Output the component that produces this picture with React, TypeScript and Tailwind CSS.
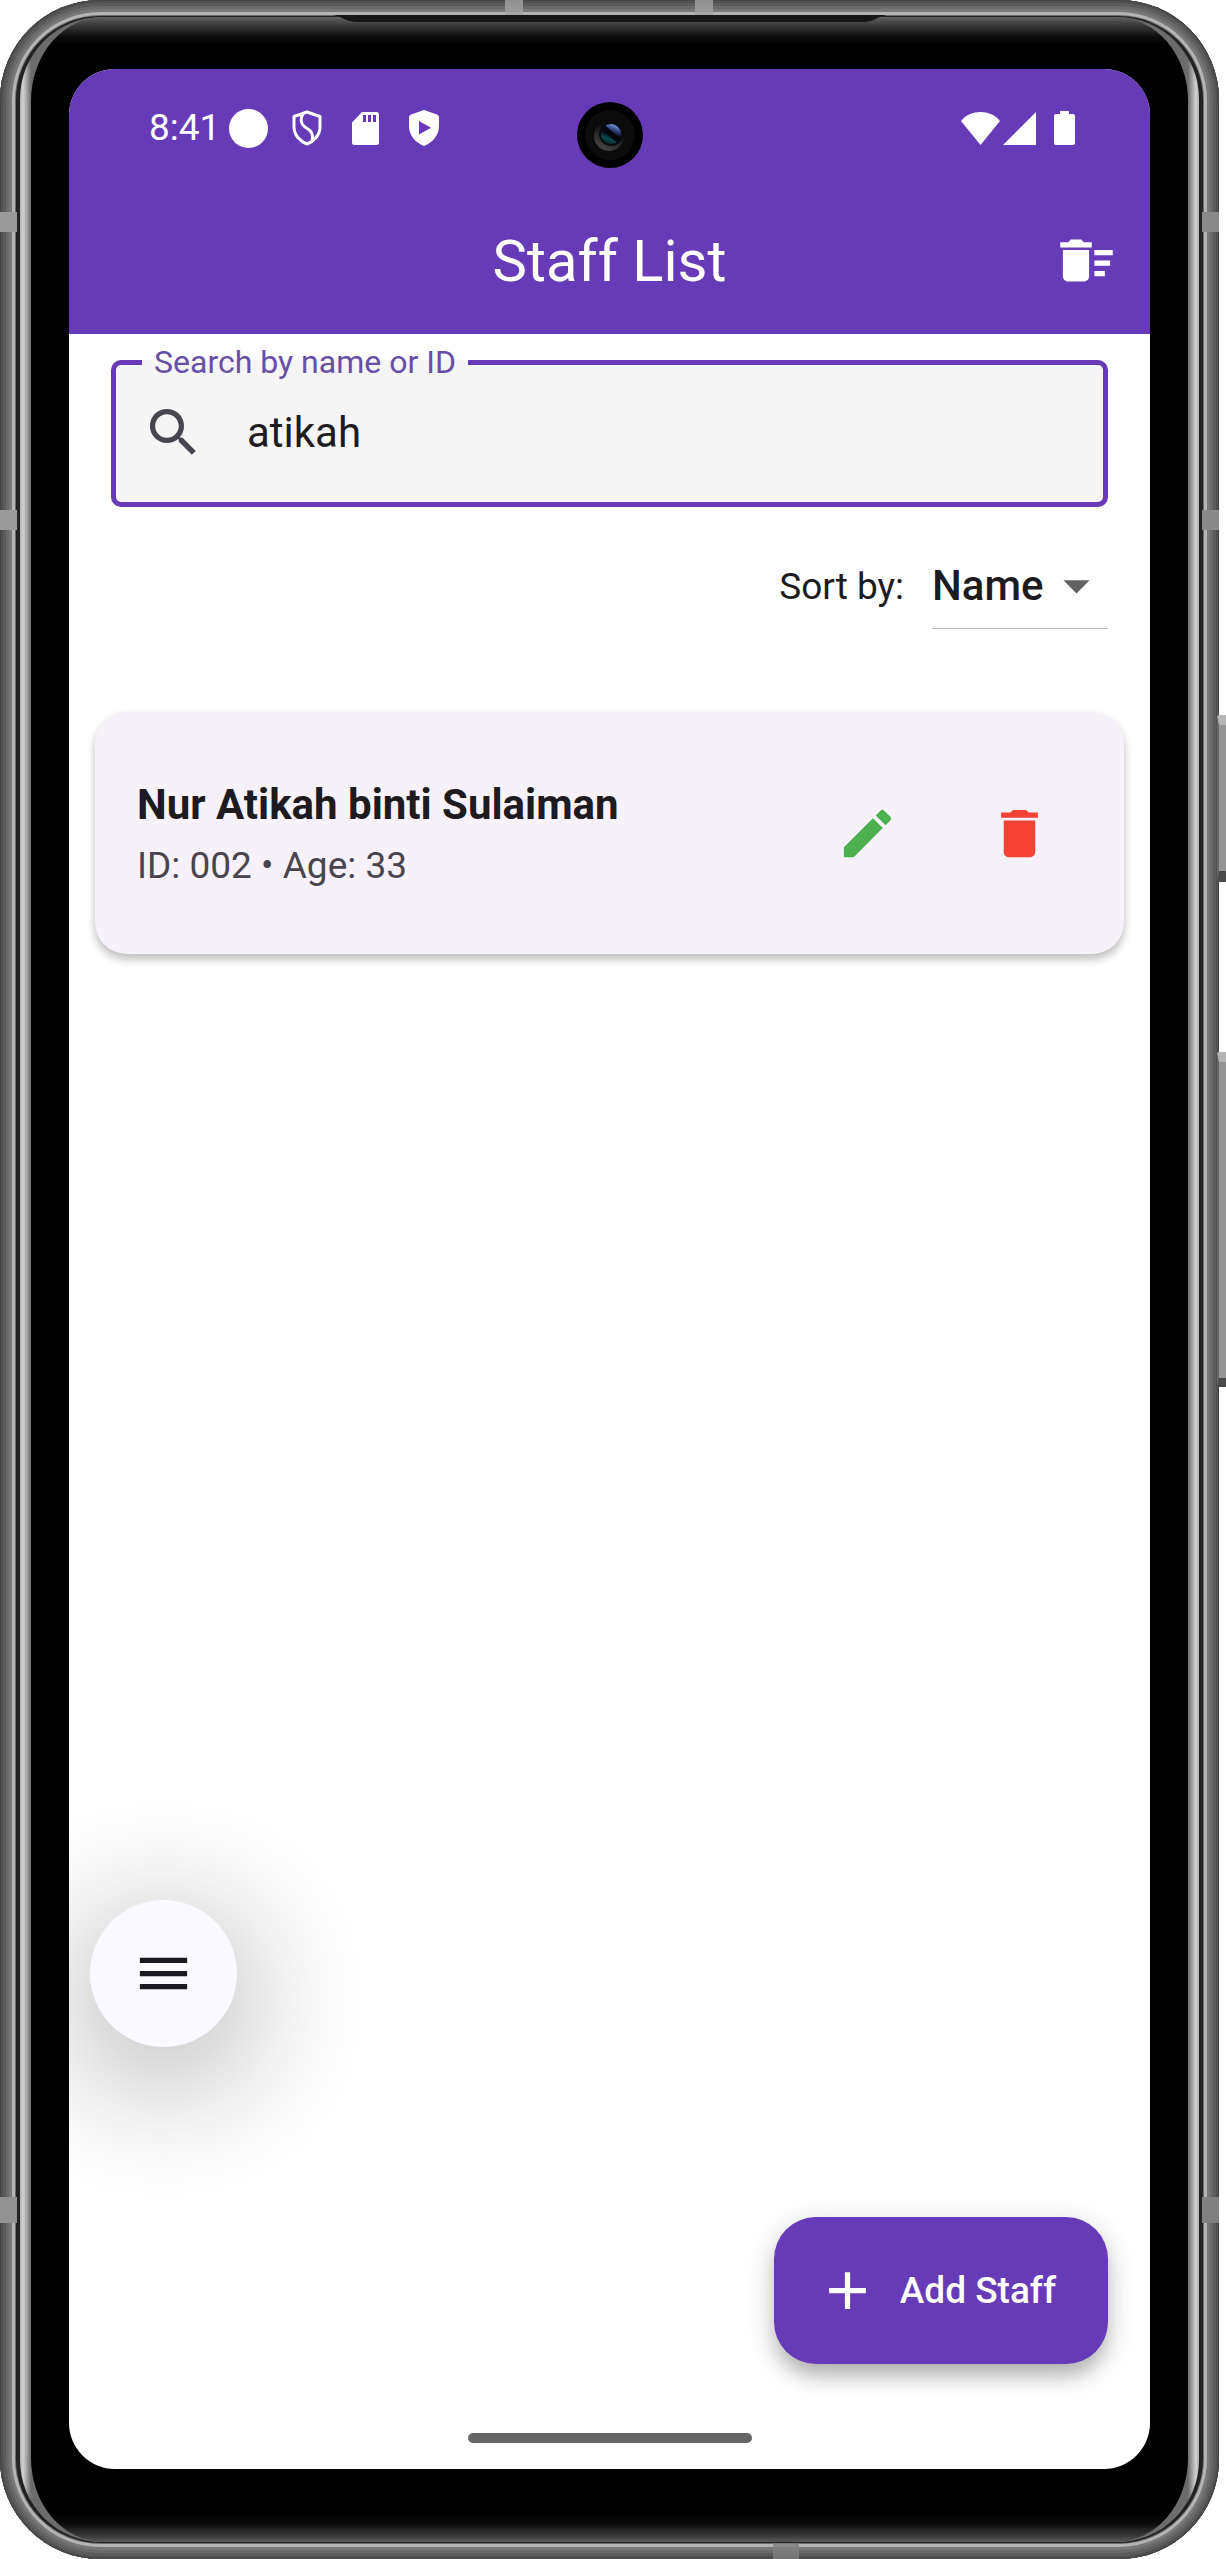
import { useState } from "react";
import {
  MdAdd,
  MdArrowDropDown,
  MdDelete,
  MdDeleteSweep,
  MdEdit,
  MdMenu,
  MdSearch,
} from "react-icons/md";

const staff = [{ id: "002", name: "Nur Atikah binti Sulaiman", age: 33 }];

/** Coloured seams and hardware keys on the metal edge of the handset. */
function EdgeDetails() {
  return (
    <div aria-hidden="true">
      <span className="absolute top-0 left-[505px] h-5 w-[18px] bg-[#a3a3a3]/80" />
      <span className="absolute top-0 left-[695px] h-5 w-[18px] bg-[#a3a3a3]/80" />
      <span className="absolute bottom-0 left-[773px] h-4 w-[26px] bg-[#808080]/80" />
      <span className="absolute top-[212px] left-0 h-5 w-[17px] bg-[#9a9a9a]" />
      <span className="absolute top-[510px] left-0 h-5 w-[17px] bg-[#9a9a9a]" />
      <span className="absolute bottom-[336px] left-0 h-[26px] w-[17px] bg-[#929292]" />
      <span className="absolute top-[212px] right-0 h-5 w-[17px] bg-[#8a8a8a]" />
      <span className="absolute top-[510px] right-0 h-5 w-[17px] bg-[#8a8a8a]" />
      <span className="absolute right-0 bottom-[336px] h-[26px] w-[17px] bg-[#808080]" />
      <span className="absolute top-[715px] -right-[7px] h-[167px] w-[9px] rounded-l-xs border-t-[10px] border-b-[11px] border-l-2 border-t-[#b5b5b5] border-b-[#4a4a4a] border-l-[#666] bg-[#959595]" />
      <span className="absolute top-[1052px] -right-[7px] h-[335px] w-[9px] rounded-l-xs border-t-[10px] border-b-[9px] border-l-2 border-t-[#b5b5b5] border-b-[#4a4a4a] border-l-[#666] bg-[#959595]" />
    </div>
  );
}

/** Shadow line of the earpiece slot along the top edge of the glass. */
function EarpieceSlot() {
  return (
    <svg
      aria-hidden="true"
      viewBox="0 0 560 8"
      className="absolute top-[15px] left-1/2 h-2 w-[560px] -translate-x-1/2"
    >
      <path d="M0 0H560C548 0 546 7 532 7H28C14 7 12 0 0 0Z" fill="#161616" />
    </svg>
  );
}

function Camera() {
  return (
    <svg
      aria-hidden="true"
      viewBox="0 0 66 66"
      className="absolute top-[33px] left-1/2 size-[66px] -translate-x-1/2"
    >
      <defs>
        <linearGradient id="lens" x1="0.7" y1="0" x2="0.3" y2="1">
          <stop offset="0" stopColor="#7d9de0" />
          <stop offset="0.3" stopColor="#2a3f78" />
          <stop offset="0.5" stopColor="#04080d" />
          <stop offset="0.75" stopColor="#064a4e" />
          <stop offset="1" stopColor="#032326" />
        </linearGradient>
        <linearGradient id="rim" x1="0.8" y1="0" x2="0.3" y2="1">
          <stop offset="0.3" stopColor="#0b0b0b" />
          <stop offset="1" stopColor="#4a4a4c" />
        </linearGradient>
      </defs>
      <circle cx="33" cy="33" r="33" fill="#000" />
      <circle cx="33" cy="33" r="25" fill="#0b0b0b" />
      <circle cx="32" cy="34" r="15" fill="url(#rim)" />
      <circle cx="34" cy="32" r="12" fill="#0a0c10" />
      <circle cx="34" cy="32" r="10" fill="url(#lens)" />
      <path d="M26 25L42 39" stroke="#05070c" strokeWidth="5" />
    </svg>
  );
}

function StatusBar() {
  return (
    <div className="flex h-[118px] items-center justify-between pr-[75px] pl-20 text-white">
      <div className="flex items-center">
        <span className="w-20 text-[37px] leading-10">8:41</span>
        <svg viewBox="0 0 39 39" className="size-[39px]" aria-hidden="true">
          <circle cx="19.5" cy="19.5" r="19.5" fill="currentColor" />
        </svg>
        <svg
          viewBox="0 0 30 36"
          className="ml-6 h-9 w-[30px]"
          fill="none"
          stroke="currentColor"
          strokeWidth="3"
          strokeLinejoin="round"
          aria-hidden="true"
        >
          <path d="M15 2L28 6.500V17C28 25 22 31.500 15 34C8 31.500 2 25 2 17V6.500Z" />
          <path d="M11 3.500C8 9 9 14 13 17C18 20 22 23 20 31" />
        </svg>
        <svg viewBox="0 0 27 33" className="ml-[30px] h-[33px] w-[27px]" aria-hidden="true">
          <path
            fill="currentColor"
            fillRule="evenodd"
            d="M10 0H24.500Q27 0 27 2.500V30.500Q27 33 24.500 33H2.500Q0 33 0 30.500V10.500ZM11 3V10H14V3ZM16 3V10H19V3ZM21 3V10H24V3Z"
          />
        </svg>
        <svg viewBox="0 0 30 36" className="ml-[30px] h-9 w-[30px]" aria-hidden="true">
          <path
            fill="currentColor"
            fillRule="evenodd"
            d="M15 0L28 4.500Q30 5.300 30 7.500V16C30 25.500 23.500 32.500 15 36C6.500 32.500 0 25.500 0 16V7.500Q0 5.300 2 4.500ZM10 11V24.500L22 17.700Z"
          />
        </svg>
      </div>
      <div className="flex items-center">
        <svg viewBox="0 0 39 33" className="h-[33px] w-[39px]" aria-hidden="true">
          <path fill="currentColor" d="M0 9C9 -3 30 -3 39 9L19.500 33Z" />
        </svg>
        <svg viewBox="0 0 33 33" className="ml-[3px] size-[33px]" aria-hidden="true">
          <path fill="currentColor" d="M33 0V33H0Z" />
        </svg>
        <svg viewBox="0 0 21 34" className="ml-[18px] h-[34px] w-[21px]" aria-hidden="true">
          <path
            fill="currentColor"
            d="M6 0H15V3H19Q21 3 21 5V32Q21 34 19 34H2Q0 34 0 32V5Q0 3 2 3H6Z"
          />
        </svg>
      </div>
    </div>
  );
}

function Header() {
  return (
    <header className="bg-[#673ab7] text-white">
      <StatusBar />
      <div className="grid h-[147px] grid-cols-[1fr_auto_1fr] items-center px-8">
        <h1 className="col-start-2 text-[58px] leading-[72px]">Staff List</h1>
        <button type="button" aria-label="Delete all staff" className="justify-self-end">
          <MdDeleteSweep className="size-[63px]" />
        </button>
      </div>
    </header>
  );
}

function SearchField({ value, onChange }: { value: string; onChange: (v: string) => void }) {
  return (
    <fieldset className="mx-[42px] mt-[10px] rounded-[10px] border-[5px] border-[#673ab7] bg-[#f5f5f5]">
      <legend className="ml-[26px] px-3 text-[32px] leading-9 text-[#6750a4]">
        <label htmlFor="search">Search by name or ID</label>
      </legend>
      <div className="flex items-center gap-[42px] pt-[21px] pr-8 pb-[38px] pl-[26px]">
        <MdSearch className="size-[63px] shrink-0 text-[#49454f]" />
        <input
          id="search"
          type="text"
          value={value}
          onChange={(e) => onChange(e.target.value)}
          className="min-w-0 flex-1 bg-transparent text-[42px] leading-[63px] text-[#1d1b20] outline-none"
        />
      </div>
    </fieldset>
  );
}

function SortRow() {
  return (
    <div className="mx-[42px] mt-4 flex items-center justify-end gap-7 text-[#1d1b20]">
      <label htmlFor="sort" className="text-[37px] leading-[53px]">
        Sort by:
      </label>
      <div className="py-5">
        <div className="relative border-b border-[#bdbdbd]">
          <select
            id="sort"
            className="block h-[85px] w-44 appearance-none bg-transparent text-[42px] font-medium outline-none"
          >
            <option>Name</option>
            <option>Age</option>
            <option>ID</option>
          </select>
          <MdArrowDropDown className="pointer-events-none absolute inset-y-0 right-0 my-auto size-[63px] text-[#616161]" />
        </div>
      </div>
    </div>
  );
}

function StaffCard({ id, name, age }: { id: string; name: string; age: number }) {
  return (
    <li className="flex items-center gap-[26px] rounded-[32px] bg-[#f7f2fa] px-[42px] py-[58px] shadow-[0_6px_8px_rgba(0,0,0,0.16),0_4px_10px_rgba(0,0,0,0.12)]">
      <div className="min-w-0 flex-1">
        <h2 className="text-[42px] leading-[66px] font-bold text-[#1d1b20]">{name}</h2>
        <p className="text-[37px] leading-[56px] text-[#49454f]">
          ID: {id} • Age: {age}
        </p>
      </div>
      <button
        type="button"
        aria-label={`Edit ${name}`}
        className="grid size-[126px] place-items-center text-[#4caf50]"
      >
        <MdEdit className="size-[63px]" />
      </button>
      <button
        type="button"
        aria-label={`Delete ${name}`}
        className="grid size-[126px] place-items-center text-[#f44336]"
      >
        <MdDelete className="size-[63px]" />
      </button>
    </li>
  );
}

function StaffScreen() {
  const [query, setQuery] = useState("atikah");
  const q = query.toLowerCase();
  const shown = staff.filter((s) => s.name.toLowerCase().includes(q) || s.id.includes(q));

  return (
    <div className="relative flex flex-1 flex-col overflow-hidden rounded-[46px] bg-white">
      <Header />
      <Camera />
      <main className="flex flex-1 flex-col">
        <SearchField value={query} onChange={setQuery} />
        <SortRow />
        <ul className="mx-[26px] mt-[63px] flex flex-col gap-5">
          {shown.map((s) => (
            <StaffCard key={s.id} {...s} />
          ))}
        </ul>
        <button
          type="button"
          aria-label="Open menu"
          className="mt-auto mb-[170px] ml-[21px] grid size-[147px] place-items-center self-start rounded-full bg-[#f9f9ff] text-[#1a1b20] shadow-[0_26px_130px_13px_rgba(0,0,0,0.3)]"
        >
          <MdMenu className="size-[63px]" />
        </button>
        <button
          type="button"
          className="mr-[42px] flex h-[147px] items-center gap-[21px] self-end rounded-[42px] bg-[#673ab7] pr-[52px] pl-[42px] text-[37px] font-medium text-white shadow-[0_14px_18px_-3px_rgba(0,0,0,0.2),0_8px_32px_rgba(0,0,0,0.18)]"
        >
          <MdAdd className="size-[63px]" />
          Add Staff
        </button>
      </main>
      <div className="mx-auto mt-[69px] mb-[26px] h-2.5 w-[284px] rounded-full bg-[#666]" />
    </div>
  );
}

export default function App() {
  return (
    <div className="flex min-h-screen bg-white pr-[7px] font-[Roboto,sans-serif]">
      <div className="relative flex flex-1 flex-col overflow-visible rounded-[100px] bg-[#222] px-5 py-[17px] shadow-[inset_0_0_0_1px_#454545,inset_0_0_0_3px_#505050,inset_0_0_0_6px_#5c5c5c,inset_0_0_0_9px_#6a6a6a,inset_0_0_0_12px_#787878,inset_0_0_0_15px_#b4b4b4,inset_0_0_0_16px_#6a6a6a]">
        <EdgeDetails />
        <div className="flex flex-1 flex-col rounded-[82px] bg-[linear-gradient(to_right,#b0b0b0,#d2d2d2_3px,#a0a0a0_7px,#6c6c6c_11px,#6c6c6c_calc(100%-11px),#a0a0a0_calc(100%-7px),#d2d2d2_calc(100%-3px),#b0b0b0)] px-[11px]">
          <div className="flex flex-1 flex-col rounded-[72px/84px] bg-[linear-gradient(to_bottom,#626262,#3a3a3a_8px,#0c0c0c_20px,#000_28px,#000_calc(100%-28px),#0c0c0c_calc(100%-18px),#3a3a3a_calc(100%-6px),#5a5a5a)] px-[38px] pt-[52px] pb-[73px]">
            <StaffScreen />
          </div>
        </div>
        <EarpieceSlot />
      </div>
    </div>
  );
}
